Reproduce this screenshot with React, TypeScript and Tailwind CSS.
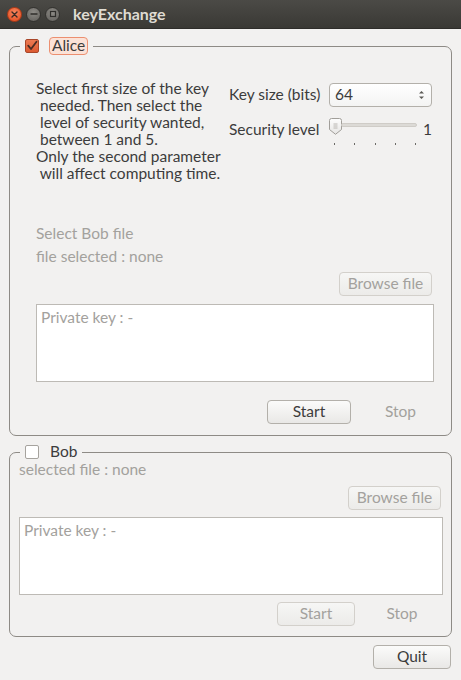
import React from "react";

function TitleBar() {
  return (
    <div className="h-[29px] shrink-0 flex items-center bg-gradient-to-b from-[#4b4a46] to-[#3a3935] border-b border-[#2e2d2a]">
      <div className="flex items-center gap-[4px] pl-[7px]">
        <div className="w-[15px] h-[15px] rounded-full bg-[radial-gradient(circle_at_50%_35%,#f7875f,#e2491c)] border border-[#b23a16] flex items-center justify-center">
          <svg width="7" height="7" viewBox="0 0 7 7">
            <path d="M1 1L6 6M6 1L1 6" stroke="#3b2a24" strokeWidth="1.4" strokeLinecap="round" />
          </svg>
        </div>
        <div className="w-[15px] h-[15px] rounded-full bg-[radial-gradient(circle_at_50%_35%,#8e8c87,#5f5d59)] border border-[#33322f] flex items-center justify-center">
          <svg width="8" height="8" viewBox="0 0 8 8">
            <path d="M1 4H7" stroke="#2f2e2b" strokeWidth="1.4" strokeLinecap="round" />
          </svg>
        </div>
        <div className="w-[15px] h-[15px] rounded-full bg-[radial-gradient(circle_at_50%_35%,#8e8c87,#5f5d59)] border border-[#33322f] flex items-center justify-center">
          <svg width="8" height="8" viewBox="0 0 8 8">
            <rect x="1.5" y="1.5" width="5" height="5" fill="none" stroke="#2f2e2b" strokeWidth="1.2" />
          </svg>
        </div>
      </div>
      <div className="ml-[13px] text-[16px] font-bold text-[#dfdbd2] leading-none">keyExchange</div>
    </div>
  );
}

function Button({ label, enabled, className }: { label: string; enabled: boolean; className: string }) {
  return (
    <div
      className={
        "h-[24px] flex items-center justify-center rounded-[4px] border " +
        (enabled
          ? "border-[#b3b0aa] bg-gradient-to-b from-[#fbfbfa] to-[#e9e8e6] text-[#3c3c3c] "
          : "border-[#d3d0cb] bg-gradient-to-b from-[#f6f6f5] to-[#ecebe9] text-[#a3a19d] ") +
        className
      }
    >
      {label}
    </div>
  );
}

function FlatStop({ className }: { className: string }) {
  return <div className={"h-[24px] flex items-center justify-center text-[#a3a19d] " + className}>Stop</div>;
}

function CheckedBox() {
  return (
    <div className="w-[14px] h-[14px] rounded-[2px] border border-[#a9472a] bg-gradient-to-b from-[#ec7a52] to-[#dc5a31] flex items-center justify-center">
      <svg width="12" height="12" viewBox="0 0 12 12">
        <path d="M2.2 5.6L5 9L10.5 1.8" fill="none" stroke="#4a2d24" strokeWidth="1.8" strokeLinecap="round" strokeLinejoin="round" />
      </svg>
    </div>
  );
}

function EmptyBox() {
  return <div className="w-[14px] h-[14px] rounded-[2px] border border-[#a6a39e] bg-white" />;
}

function SliderHandle() {
  return (
    <svg width="13" height="17" viewBox="0 0 13 17">
      <defs>
        <linearGradient id="hg" x1="0" y1="0" x2="0" y2="1">
          <stop offset="0" stopColor="#fdfdfd" />
          <stop offset="1" stopColor="#e6e5e3" />
        </linearGradient>
      </defs>
      <path d="M2.5 0.5H10.5Q12.5 0.5 12.5 2.5V11.5L6.5 16.3L0.5 11.5V2.5Q0.5 0.5 2.5 0.5Z" fill="url(#hg)" stroke="#a19e99" />
      <path d="M4.5 6H8.5M4.5 8H8.5M4.5 10H8.5" stroke="#b3b0ab" strokeWidth="0.9" />
    </svg>
  );
}

function TextArea({ className }: { className: string }) {
  return (
    <div className={"h-[78px] bg-white border border-[#bdbab5] px-[4px] pt-[4px] text-[#a3a19d] leading-[17px] " + className}>
      Private key : -
    </div>
  );
}

export default function App() {
  return (
    <div className="w-[461px] h-[680px] bg-[#f2f1f0] flex flex-col font-['Lato',sans-serif] text-[15.5px] text-[#3c3c3c] overflow-hidden">
      <TitleBar />
      <div className="flex flex-col px-[9px] pt-[8px]">
        {/* Alice */}
        <fieldset className="border border-[#8e8b86] rounded-[7px] flex flex-col">
          <legend className="ml-[10px] pl-[5px] pr-[5px] h-[18px]">
            <div className="flex items-center h-[18px]">
              <CheckedBox />
              <div className="ml-[10px] h-[18px] px-[2px] rounded-[4px] border border-[#ec8f70] bg-[#fbe2d7] flex items-center leading-none">
                Alice
              </div>
            </div>
          </legend>
          <div className="flex pt-[25px] pl-[26px] pr-[19px]">
            <div className="w-[193px] leading-[17px] whitespace-pre">
              <div>Select first size of the key</div>
              <div> needed. Then select the</div>
              <div> level of security wanted,</div>
              <div> between 1 and 5.</div>
              <div>Only the second parameter</div>
              <div> will affect computing time.</div>
            </div>
            <div className="flex-1 flex flex-col pt-[3px]">
              <div className="flex items-center h-[24px]">
                <div className="w-[100px]">Key size (bits)</div>
                <div className="flex-1 h-[24px] rounded-[4px] border border-[#b3b0aa] bg-gradient-to-b from-[#ffffff] to-[#f4f4f3] flex items-center pl-[5px] pr-[6px] justify-between">
                  <span>64</span>
                  <svg width="7" height="12" viewBox="0 0 7 12">
                    <path d="M1 4.5L3.5 2L6 4.5Z" fill="#5a5955" />
                    <path d="M1 7.5L3.5 10L6 7.5Z" fill="#5a5955" />
                  </svg>
                </div>
              </div>
              <div className="flex items-start mt-[14px]">
                <div className="w-[100px] leading-[17px]">Security level</div>
                <div className="flex flex-col w-[88px] -mt-[3px]">
                  <div className="flex items-center h-[17px]">
                    <SliderHandle />
                    <div className="flex-1 h-[4px] rounded-full bg-[#dcdad6] border border-[#cfccc7] -ml-[1px] mt-[-3px]" />
                  </div>
                  <div className="flex justify-between px-[5px] mt-[8px] pr-[1px]">
                    {[0, 1, 2, 3, 4].map((i) => (
                      <div key={i} className="w-[1px] h-[2px] bg-[#6b6a66]" />
                    ))}
                  </div>
                </div>
                <div className="flex-1 text-right leading-[17px]">1</div>
              </div>
            </div>
          </div>
          <div className="pl-[26px] mt-[43px] leading-[17px] text-[#a3a19d]">Select Bob file</div>
          <div className="pl-[26px] mt-[6px] leading-[17px] text-[#a3a19d]">file selected : none</div>
          <div className="flex justify-end pr-[19px] mt-[7px]">
            <Button label="Browse file" enabled={false} className="w-[93px]" />
          </div>
          <div className="pl-[26px] pr-[17px] mt-[8px]">
            <TextArea className="" />
          </div>
          <div className="flex justify-end pr-[9px] mt-[18px] mb-[11px] gap-[8px]">
            <Button label="Start" enabled={true} className="w-[84px]" />
            <FlatStop className="w-[83px]" />
          </div>
        </fieldset>

        {/* Bob */}
        <fieldset className="mt-[7px] border border-[#8e8b86] rounded-[7px] flex flex-col">
          <legend className="ml-[10px] pl-[5px] pr-[5px] h-[18px]">
            <div className="flex items-center h-[18px]">
              <EmptyBox />
              <div className="ml-[11px] leading-none">Bob</div>
            </div>
          </legend>
          <div className="pl-[9px] leading-[17px] text-[#a3a19d]">selected file : none</div>
          <div className="flex justify-end pr-[10px] mt-[8px]">
            <Button label="Browse file" enabled={false} className="w-[93px]" />
          </div>
          <div className="pl-[9px] pr-[8px] mt-[7px]">
            <TextArea className="" />
          </div>
          <div className="flex justify-end pr-[10px] mt-[7px] mb-[10px] gap-[8px]">
            <Button label="Start" enabled={false} className="w-[78px]" />
            <FlatStop className="w-[78px]" />
          </div>
        </fieldset>
      </div>
      <div className="flex justify-end pr-[10px] mt-[8px]">
        <Button label="Quit" enabled={true} className="w-[78px]" />
      </div>
    </div>
  );
}
